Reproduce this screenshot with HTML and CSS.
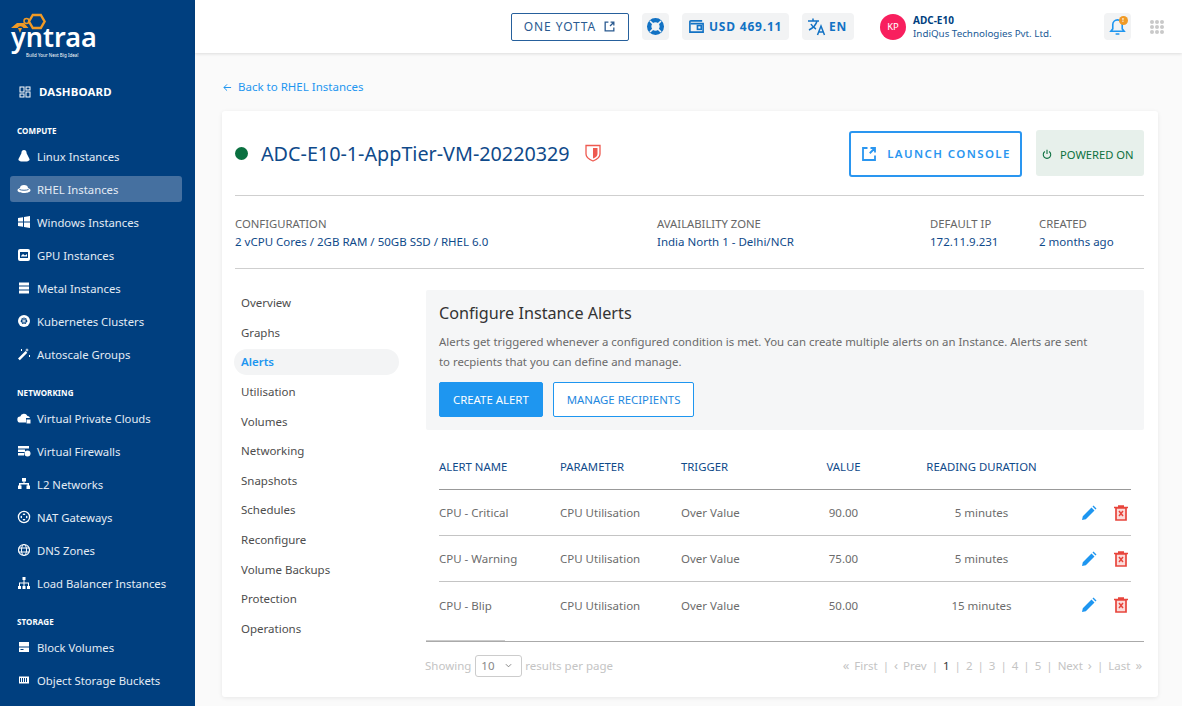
FILE: index.html
```html
<!DOCTYPE html>
<html lang="en">
  <head>
    <meta charset="utf-8">
    <title>Instance Alerts</title>
    <link rel="stylesheet" href="styles.css">
  </head>
  <body>
    <svg class="defs" width="0" height="0">
      <symbol id="ext" viewBox="0 0 24 24"><path d="M10 4H4v16h16v-6M13 11l7-7M14 4h6v6" fill="none" stroke="currentColor" stroke-width="2.4"/></symbol>
      <symbol id="pen" viewBox="0 0 16 16"><path d="M1 15l.8-3.800L10.500 2.500l3 3-8.700 8.700zM11.500 1.500l1-1 3 3-1 1z" fill="#1e96f0"/></symbol>
      <symbol id="bin" viewBox="0 0 14 16"><path d="M0 2.500h14M4 1h6" fill="none" stroke="#e8453c" stroke-width="1.500"/><path d="M2 3v12h10V3z" fill="#fbdcda" stroke="#e8453c" stroke-width="1.700"/><path d="M5 6l4 5M9 6l-4 5" fill="none" stroke="#e8453c" stroke-width="1.500"/></symbol>
    </svg>

    <aside class="side">
      <div class="logo">
        <svg class="logo-mark" viewBox="0 0 36 24" width="36" height="24">
          <path d="M18 8.500l3.800-6.500h8l3.800 6.500-3.800 6.500h-8z" fill="none" stroke="#f09a26" stroke-width="2.400"/>
          <circle cx="15.500" cy="8" r="2.500" fill="none" stroke="#f09a26" stroke-width="1.500"/>
          <path d="M0 15l6-5h7l4.500 5h-5a3.500 3.500 0 0 0-6 0z" fill="#f09a26"/>
          <path d="M7 15h4l-2 5z" fill="#f09a26"/>
        </svg>
        <div class="logo-word">yntraa</div>
        <div class="logo-tag">Build Your Next Big Idea!</div>
      </div>

      <a class="dash">
        <svg viewBox="0 0 12 12" width="12" height="12" fill="none" stroke="#fff"><rect x="1" y="1" width="4" height="5"/><rect x="7" y="1" width="4" height="3"/><rect x="1" y="8" width="4" height="3"/><rect x="7" y="6" width="4" height="5"/></svg>
        DASHBOARD
      </a>

      <h6 class="group">COMPUTE</h6>
      <a class="item"><svg viewBox="0 0 14 14"><path d="M7 1c2 0 2.600 1.600 2.600 3.200L12.500 10c.4 1.400-1 2.600-5.500 2.600S1.100 11.400 1.500 10l2.900-5.800C4.400 2.600 5 1 7 1z"/></svg>Linux Instances</a>
      <a class="item on"><svg viewBox="0 0 14 14"><path d="M3 6c0-2 1.500-3 4-3s4 1 4 3c1.500.5 2.500 1.200 2.500 2.200C13.500 10 10 11 7 11S.5 10 .5 8.200C.5 7.200 1.500 6.500 3 6z"/><path d="M2.500 7.500c2 1 7 1 9 0" stroke="#4570a0" fill="none"/></svg>RHEL Instances</a>
      <a class="item"><svg viewBox="0 0 14 14"><path d="M1 3l5-.8V6.500H1zM7 2l6-1v5.500H7zM1 7.500h5v4.300L1 11zM7 7.500h6V13l-6-1z"/></svg>Windows Instances</a>
      <a class="item"><svg viewBox="0 0 14 14"><rect x="1" y="1" width="12" height="12" rx="2"/><rect x="3" y="4" width="8" height="6" fill="#003f7f"/><path d="M4 8l2-2 2 1.500L10 6v2.500H4z"/></svg>GPU Instances</a>
      <a class="item"><svg viewBox="0 0 14 14"><path d="M2 1.500h10v3H2zM2 5.500h10v3H2zM2 9.500h10v3H2z"/></svg>Metal Instances</a>
      <a class="item"><svg viewBox="0 0 14 14"><circle cx="7" cy="7" r="6"/><path d="M7 3.500l2.700 1.300.7 2.800-1.900 2.400h-3L3.600 7.600l.7-2.800z" fill="#003f7f"/><path d="M7 4v6M4.500 5.500l5 3M9.500 5.500l-5 3" stroke="#fff" stroke-width=".7"/></svg>Kubernetes Clusters</a>
      <a class="item"><svg viewBox="0 0 14 14"><path d="M1 11.500L8.500 4l1.800 1.800L2.800 13.300zM10 1l.5 1.500L12 3l-1.500.5L10 5l-.5-1.500L8 3l1.500-.5zM4 2h1v2H4zM12 8h1v2h-1z"/></svg>Autoscale Groups</a>

      <h6 class="group">NETWORKING</h6>
      <a class="item"><svg viewBox="0 0 14 14"><path d="M3.500 11.500a3 3 0 0 1-.3-6A4 4 0 0 1 10.500 5a3 3 0 0 1 2.500 2H9v4.500z"/><path d="M9.500 8.500h4v4h-4z"/></svg>Virtual Private Clouds</a>
      <a class="item"><svg viewBox="0 0 14 14"><path d="M1 2h11v2.500H1zM1 5.500h7v2.500H1zM1 9h6v2.500H1z"/><circle cx="10.500" cy="9.500" r="3"/></svg>Virtual Firewalls</a>
      <a class="item"><svg viewBox="0 0 14 14"><path d="M5 1h4v3.500H7.500V6H12v2.500h1V12H9.500V8.500h1V7.500h-7v1h1V12H1V8.500h1V6h4.500V4.500H5z"/></svg>L2 Networks</a>
      <a class="item"><svg viewBox="0 0 14 14"><circle cx="7" cy="7" r="5.600" fill="none" stroke="#fff" stroke-width="1.300"/><path d="M7 3l1.500 2h-3zM7 11l-1.500-2h3zM3 7l2-1.500v3zM11 7L9 5.500v3z"/></svg>NAT Gateways</a>
      <a class="item"><svg viewBox="0 0 14 14"><circle cx="7" cy="7" r="5.500" fill="none" stroke="#fff" stroke-width="1.200"/><ellipse cx="7" cy="7" rx="2.500" ry="5.500" fill="none" stroke="#fff"/><path d="M1.500 5h11M1.500 9h11" stroke="#fff" fill="none"/></svg>DNS Zones</a>
      <a class="item"><svg viewBox="0 0 14 14"><path d="M5.500 1h3v3H7.500v2.500H12V10h1v3h-3v-3h1V7.500H7.500V10h1v3h-3v-3h1V7.500H3V10h1v3H1v-3h1V6.500h4.500V4h-1z"/></svg>Load Balancer Instances</a>

      <h6 class="group">STORAGE</h6>
      <a class="item"><svg viewBox="0 0 14 14"><path d="M2 2h10v4.500H2zM2 7.500h10V12H2z"/><path d="M3.500 9h3v1h-3z" fill="#003f7f"/></svg>Block Volumes</a>
      <a class="item"><svg viewBox="0 0 14 14"><path d="M2 3.500h10v7H2z"/><path d="M3.500 5v4M5.500 5v4M7.500 5v4M9.500 5v4" stroke="#003f7f"/></svg>Object Storage Buckets</a>
    </aside>

    <div class="wrap">
      <header class="top">
        <a class="yotta">ONE YOTTA <svg width="13" height="13"><use href="#ext"/></svg></a>
        <span class="chip chip-icon">
          <svg viewBox="0 0 24 24" width="19" height="19"><circle cx="12" cy="12" r="8" fill="none" stroke="#1272c4" stroke-width="5.500"/><path d="M5 5l5 5M19 5l-5 5M5 19l5-5M19 19l-5-5" stroke="#f2f3f4" stroke-width="2"/></svg>
        </span>
        <span class="chip chip-usd">
          <svg viewBox="0 0 18 18" width="17" height="17" fill="none" stroke="#1272c4" stroke-width="1.700"><path d="M15 3H3a1 1 0 0 0-1 1v11h14V6H3"/><rect x="10" y="8" width="4" height="4"/></svg>
          USD 469.11
        </span>
        <span class="chip chip-lang">
          <svg viewBox="0 0 20 20" width="20" height="20" fill="none" stroke="#1272c4" stroke-width="1.500"><path d="M1 4h11M6 1.500V4M10 4c-1 4-4 7-8 9M4 7c1 2 3 4 5 5M10.500 18l3.500-9 3.500 9M11.800 15h4.500"/></svg>
          EN
        </span>
        <div class="user">
          <span class="avatar">KP</span>
          <div class="user-txt">
            <b>ADC-E10</b>
            <span>IndiQus Technologies Pvt. Ltd.</span>
          </div>
        </div>
        <span class="chip bell">
          <svg viewBox="0 0 18 20" width="17" height="19" fill="none" stroke="#1e96f0" stroke-width="1.700"><path d="M2 15h14l-2-2.500V8a5 5 0 0 0-10 0v4.500zM7 18h4"/></svg>
          <i class="badge">!</i>
        </span>
        <div class="apps">
          <i></i><i></i><i></i><i></i><i></i><i></i><i></i><i></i><i></i>
        </div>
      </header>

      <main class="main">
        <a class="back">
          <svg viewBox="0 0 10 10" width="9" height="9" fill="none" stroke="#1e96f0" stroke-width="1.100"><path d="M9 5H1M4.500 1.500L1 5l3.500 3.500"/></svg>
          Back to RHEL Instances
        </a>

        <section class="card">
          <div class="head">
            <span class="dot"></span>
            <h1>ADC-E10-1-AppTier-VM-20220329</h1>
            <svg class="shield" viewBox="0 0 16 18" width="16" height="18"><path d="M1 1.500h14V10c0 3-3 5.500-7 7-4-1.500-7-4-7-7z" fill="#fff" stroke="#ee5a50" stroke-width="1.300"/><path d="M8 4h4.500v6c0 2-2 3.500-4.500 4.500z" fill="#ee5a50"/></svg>
            <a class="launch"><svg width="18" height="18"><use href="#ext"/></svg>LAUNCH CONSOLE</a>
            <span class="power">
              <svg viewBox="0 0 12 12" width="10" height="10" fill="none" stroke="#0c7040" stroke-width="1.300"><path d="M3.500 3a4.500 4.500 0 1 0 5 0M6 1v5"/></svg>
              POWERED ON
            </span>
          </div>

          <div class="meta">
            <div class="m1"><small>CONFIGURATION</small><span>2 vCPU Cores / 2GB RAM / 50GB SSD / RHEL 6.0</span></div>
            <div class="m2"><small>AVAILABILITY ZONE</small><span>India North 1 - Delhi/NCR</span></div>
            <div class="m3"><small>DEFAULT IP</small><span>172.11.9.231</span></div>
            <div class="m4"><small>CREATED</small><span>2 months ago</span></div>
          </div>

          <div class="body">
            <nav class="tabs">
              <a>Overview</a>
              <a>Graphs</a>
              <a class="on">Alerts</a>
              <a>Utilisation</a>
              <a>Volumes</a>
              <a>Networking</a>
              <a>Snapshots</a>
              <a>Schedules</a>
              <a>Reconfigure</a>
              <a>Volume Backups</a>
              <a>Protection</a>
              <a>Operations</a>
            </nav>

            <div class="panel">
              <div class="intro">
                <h2>Configure Instance Alerts</h2>
                <p>Alerts get triggered whenever a configured condition is met. You can create multiple alerts on an Instance. Alerts are sent to recpients that you can define and manage.</p>
                <div class="btns">
                  <a class="btn solid">CREATE ALERT</a>
                  <a class="btn">MANAGE RECIPIENTS</a>
                </div>
              </div>

              <div class="table">
                <div class="row thead"><span>ALERT NAME</span><span>PARAMETER</span><span>TRIGGER</span><span class="c">VALUE</span><span class="c">READING DURATION</span><span></span></div>
                <div class="row"><span>CPU - Critical</span><span>CPU Utilisation</span><span>Over Value</span><span class="c">90.00</span><span class="c">5 minutes</span><span class="acts"><svg width="16" height="16"><use href="#pen"/></svg><svg width="14" height="16"><use href="#bin"/></svg></span></div>
                <div class="row"><span>CPU - Warning</span><span>CPU Utilisation</span><span>Over Value</span><span class="c">75.00</span><span class="c">5 minutes</span><span class="acts"><svg width="16" height="16"><use href="#pen"/></svg><svg width="14" height="16"><use href="#bin"/></svg></span></div>
                <div class="row last"><span>CPU - Blip</span><span>CPU Utilisation</span><span>Over Value</span><span class="c">50.00</span><span class="c">15 minutes</span><span class="acts"><svg width="16" height="16"><use href="#pen"/></svg><svg width="14" height="16"><use href="#bin"/></svg></span></div>
              </div>

              <div class="pager">
                <div class="per">Showing <span class="sel">10 <svg viewBox="0 0 8 5" width="7" height="5" fill="none" stroke="#777"><path d="M1 1l3 3 3-3"/></svg></span> results per page</div>
                <div class="pages">
                  <span class="arr">&#171;</span><span>First</span><span>|</span>
                  <span class="arr">&#8249;</span><span>Prev</span><span>|</span>
                  <b>1</b><span>|</span><span>2</span><span>|</span><span>3</span><span>|</span><span>4</span><span>|</span><span>5</span><span>|</span>
                  <span>Next</span><span class="arr">&#8250;</span><span>|</span>
                  <span>Last</span><span class="arr">&#187;</span>
                </div>
              </div>
            </div>
          </div>
        </section>
      </main>
    </div>
  </body>
</html>
```

FILE: styles.css
```css
* { box-sizing: border-box; }
html, body { height: 100%; }
body {
  margin: 0;
  display: flex;
  overflow: hidden;
  font-family: "Noto Sans", "Open Sans", sans-serif;
  background-color: #fafafa;
  color: #1a4a80;
}
a { text-decoration: none; color: inherit; }
.defs { display: block; height: 0; }

/* sidebar */
.side {
  flex: 0 0 195px;
  height: 706px;
  overflow: hidden;
  background-color: #003f7f;
  color: #fff;
  padding: 13px 13px 0 10px;
}
.logo { position: relative; height: 64px; }
.logo-mark { position: absolute; left: 1px; top: 0; }
.logo-word {
  position: absolute;
  left: 1px;
  top: 14px;
  font-size: 27px;
  font-weight: 600;
  line-height: 20px;
}
.logo-tag {
  position: absolute;
  left: 16px;
  top: 39px;
  font-size: 4.500px;
  line-height: 6px;
  white-space: nowrap;
}
.dash {
  display: flex;
  align-items: center;
  gap: 8px;
  margin: 6px 0 0 9px;
  height: 17px;
  font-size: 11.400px;
  font-weight: 700;
  letter-spacing: 0.2px;
}
.group {
  margin: 0 0 0 7px;
  font-size: 8px;
  line-height: 11px;
  font-weight: 700;
  letter-spacing: 0.1px;
}
.dash + .group { margin-top: 25px; margin-bottom: 7px; }
.item + .group { margin-top: 20px; margin-bottom: 7px; }
.item {
  display: flex;
  align-items: center;
  gap: 6px;
  height: 26px;
  margin-bottom: 7px;
  padding-left: 7px;
  border-radius: 3px;
  font-size: 11.300px;
  color: #e3ebf4;
}
.item svg { width: 14px; height: 14px; fill: #fff; flex: none; }
.item.on { background-color: #4570a0; }

/* top bar */
.wrap { flex: 1; min-width: 0; }
.top {
  height: 53px;
  display: flex;
  align-items: center;
  background-color: #fff;
  box-shadow: 0 1px 3px rgba(0,0,0,0.12);
  padding-left: 316px;
}
.yotta {
  display: flex;
  align-items: center;
  justify-content: center;
  gap: 7px;
  width: 118px;
  height: 28px;
  border: 1px solid #26609c;
  border-radius: 2px;
  font-size: 12px;
  letter-spacing: 0.9px;
  color: #2a5a90;
}
.chip {
  display: flex;
  align-items: center;
  height: 27px;
  border-radius: 4px;
  background-color: #f2f3f4;
  color: #1272c4;
  font-size: 12px;
  font-weight: 700;
  letter-spacing: 0.8px;
}
.chip-icon { width: 27px; justify-content: center; margin-left: 13px; }
.chip-usd { width: 107px; margin-left: 13px; padding-left: 6px; gap: 4px; }
.chip-lang { width: 52px; margin-left: 13px; padding-left: 5px; gap: 2px; }
.user { display: flex; align-items: center; gap: 7px; margin-left: 26px; width: 224px; }
.avatar {
  width: 26px;
  height: 26px;
  border-radius: 50%;
  background-color: #f81f5e;
  color: #fff;
  font-size: 9.500px;
  display: flex;
  align-items: center;
  justify-content: center;
}
.user-txt { display: flex; flex-direction: column; font-size: 9.800px; line-height: 13px; color: #1a5a96; }
.user-txt b { color: #003f7f; font-size: 10px; }
.bell { position: relative; width: 27px; justify-content: center; }
.badge {
  position: absolute;
  top: 3px;
  right: 3px;
  width: 9px;
  height: 9px;
  border-radius: 50%;
  background-color: #f09a26;
  color: #fff;
  font: 700 6px/9px "Noto Sans", sans-serif;
  text-align: center;
}
.apps {
  display: grid;
  grid-template-columns: repeat(3, 4px);
  gap: 1px;
  margin-left: 19px;
}
.apps i { width: 4px; height: 4px; border-radius: 50%; background-color: #c9c9c9; }

/* main */
.main { padding: 27px 24px 0 27px; }
.back {
  display: flex;
  align-items: center;
  gap: 6px;
  height: 14px;
  padding-left: 1px;
  line-height: 14px;
  font-size: 11.500px;
  color: #1e96f0;
}
.card {
  margin-top: 17px;
  height: 586px;
  background-color: #fff;
  padding: 0 14px 0 13px;
  border-radius: 3px;
  box-shadow: 0 1px 4px rgba(0,0,0,0.08);
}
.head {
  display: flex;
  align-items: center;
  height: 85px;
  border-bottom: 1px solid #cfcfcf;
}
.dot { width: 13px; height: 13px; margin-top: 1px; border-radius: 50%; background-color: #0a7040; }
.head h1 {
  margin: 0 15px 0 13px;
  padding-top: 1px;
  font-size: 19.750px;
  font-weight: 400;
  color: #0f4a8a;
}
.launch {
  display: flex;
  align-items: center;
  gap: 9px;
  justify-content: center;
  margin-left: auto;
  margin-top: 1px;
  width: 173px;
  height: 46px;
  border: 2px solid #2a96f0;
  border-radius: 3px;
  font-size: 11.500px;
  font-weight: 600;
  letter-spacing: 1.400px;
  color: #2a96f0;
}
.power {
  display: flex;
  align-items: center;
  gap: 8px;
  width: 108px;
  height: 46px;
  margin-left: 14px;
  padding: 2px 0 0 6px;
  border-radius: 3px;
  background-color: #e7f0eb;
  color: #0c7040;
  font-size: 11.200px;
}
.meta {
  display: flex;
  height: 73px;
  padding-top: 20px;
  border-bottom: 1px solid #cfcfcf;
  font-size: 11.500px;
}
.meta small { display: block; font-size: 11.300px; line-height: 15px; color: #666; margin-bottom: 3px; }
.meta span { color: #0f4a8a; line-height: 15px; display: block; }
.m1 { width: 422px; }
.m2 { width: 273px; }
.m3 { width: 109px; }

.body { display: flex; padding-top: 21px; }
.tabs { width: 191px; flex: none; display: flex; flex-direction: column; }
.tabs a {
  flex: none;
  width: 165px;
  height: 26px;
  margin-left: -1px;
  margin-bottom: 3.640px;
  padding-left: 7px;
  border-radius: 13px;
  font-size: 11.500px;
  line-height: 26px;
  color: #4d4d4d;
}
.tabs a.on { background-color: #f3f4f5; color: #1e96f0; font-weight: 600; }

.panel { flex: 1; min-width: 0; }
.intro {
  height: 140px;
  padding: 12px 13px 0;
  background-color: #f5f6f7;
  border-radius: 2px;
}
.intro h2 { margin: 0; font-size: 16.200px; line-height: 22px; font-weight: 400; color: #333; }
.intro p {
  margin: 8px 0 0;
  max-width: 655px;
  font-size: 11.400px;
  line-height: 20px;
  color: #6a6a6a;
}
.btns { display: flex; gap: 10px; margin-top: 10px; }
.btn {
  height: 35px;
  padding: 0 13px;
  display: flex;
  align-items: center;
  border: 1px solid #1e96f0;
  border-radius: 2px;
  font-size: 11.400px;
  color: #1e88e0;
  background-color: #fff;
}
.btn.solid { background-color: #1e96f0; color: #fff; }

.table { margin: 0 13px; padding-top: 24px; }
.row {
  display: grid;
  grid-template-columns: 121px 121px 120.500px 84px 192px 1fr;
  align-items: center;
  height: 46px;
  border-bottom: 1px solid #c4c4c4;
  font-size: 11.500px;
  color: #6c6c6c;
}
.row.thead { height: 36px; padding-bottom: 10px; border-bottom: 1px solid #999; color: #0f4a8a; font-size: 11.350px; }
.row.last { border-bottom: 0; }
.c { text-align: center; }
.acts { display: flex; justify-content: flex-end; gap: 17px; padding-right: 3px; }

.pager {
  position: relative;
  display: flex;
  align-items: center;
  justify-content: space-between;
  margin-top: 13px;
  height: 50px;
  padding-bottom: 2px;
  border-top: 1px solid #aaa;
  font-size: 11.500px;
  color: #c4c4c4;
}
.pager::before {
  content: "";
  position: absolute;
  left: 0;
  top: -2px;
  width: 79px;
  height: 1px;
  background-color: #ccc;
}
.per { display: flex; align-items: center; gap: 4px; margin-left: -1px; }
.sel {
  display: flex;
  align-items: center;
  gap: 10px;
  height: 22px;
  width: 47px;
  margin-right: -1px;
  padding-left: 5px;
  border: 1px solid #ccc;
  border-radius: 3px;
  color: #888;
}
.pages { display: flex; gap: 5px; padding-right: 2px; }
.pages .arr { font-size: 13px; line-height: 15px; }
.pages b { font-weight: 400; color: #333; }
```
